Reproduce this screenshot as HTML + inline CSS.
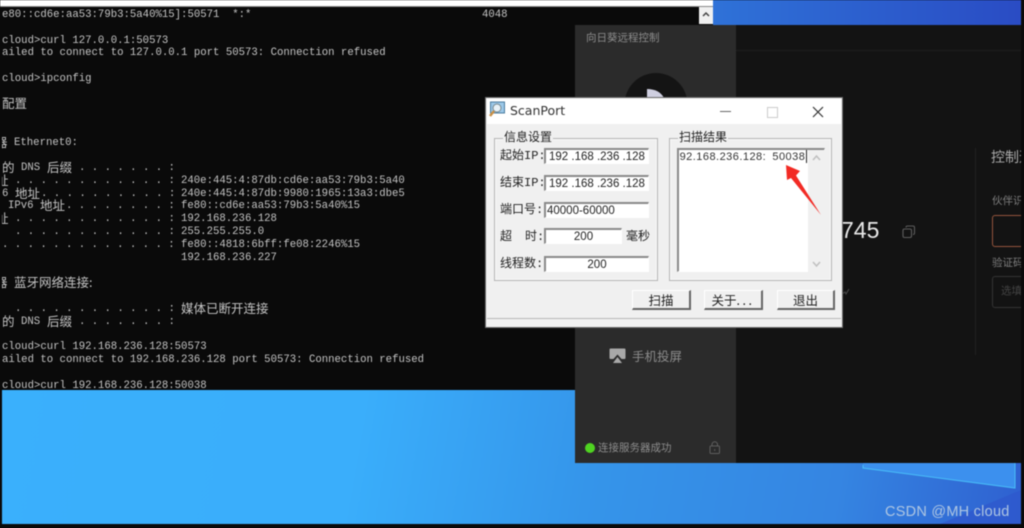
<!DOCTYPE html>
<html lang="zh"><head><meta charset="utf-8"><title>ScanPort</title>
<style>
html,body{margin:0;padding:0;width:1024px;height:528px;overflow:hidden;background:#0a0a0a}
#root{position:absolute;left:0;top:0;width:1024px;height:528px;overflow:hidden;filter:blur(.45px)}
.a{position:absolute;white-space:pre}
.t{font:10.67px/13px "Liberation Mono","Noto Sans CJK SC",monospace;color:#c4c4c4}
.c{font-family:"Noto Sans CJK SC","WenQuanYi Zen Hei",sans-serif}
.d{font:12px/16px "Liberation Mono","Noto Sans CJK SC",monospace;color:#222}
.f{position:absolute;background:#fff;border:1px solid #fff;border-top:2px solid #8a8a8a;border-left:2px solid #8a8a8a;box-sizing:border-box;font:11.5px/14px "Liberation Sans",sans-serif;color:#222;white-space:pre}
.b{position:absolute;top:290px;height:20px;box-sizing:border-box;background:#f0f0f0;border:1px solid #fff;border-right:2px solid #666;border-bottom:2px solid #666;font:12.5px/17px "Noto Sans CJK SC",sans-serif;color:#222;text-align:center}
.g{position:absolute;top:138px;height:143px;box-sizing:border-box;border:1px solid #b4b4b4;box-shadow:inset 0 0 0 1px #f8f8f8}
.s{color:#8c8c8c;font-family:"Noto Sans CJK SC",sans-serif}
</style></head><body><div id="root">
<!-- desktop -->
<div class="a" style="left:2px;top:390px;width:1019px;height:134px;background:linear-gradient(100deg,#3ab0fc 0%,#3aaefb 35%,#3595ea 58%,#3585e2 82%,#2f60d0 100%)"></div>
<div class="a" style="left:713px;top:0;width:308px;height:25px;background:linear-gradient(90deg,#2f72d8,#2a4cc4)"></div>
<svg class="a" style="left:0;top:0" width="1024" height="528">
<polygon points="863,463 1015,463 1015,488 863,468" fill="#3c90ee"/>
<polyline points="863,465 863,468 1015,488 1015,463" fill="none" stroke="#48bdf8" stroke-width="1"/>
<polygon points="1021,490 1021,524 940,524" fill="#2f58cc" opacity=".75"/>
</svg>
<!-- terminal top and scrollbar -->
<div class="a" style="left:0;top:0;width:713px;height:6px;background:#fff;border-bottom:1px solid #888"></div>
<div class="a" style="left:2px;top:7px;width:697px;height:383px;background:#0a0a0a"></div>
<div class="a" style="left:699px;top:7px;width:14px;height:17px;background:#f0f0f0"></div>
<svg class="a" style="left:699px;top:7px" width="14" height="17" fill="none" stroke="#444" stroke-width="1.500"><path d="M4 9 L7 6 L10 9"/></svg>
<!-- terminal text -->
<div class="a t" style="left:2px;top:9px">e80::cd6e:aa53:79b3:5a40%15]:50571  *:*</div>
<div class="a t" style="left:482px;top:9px">4048</div>
<div class="a t" style="left:2px;top:35px">cloud&gt;curl 127.0.0.1:50573</div>
<div class="a t" style="left:2px;top:47px">ailed to connect to 127.0.0.1 port 50573: Connection refused</div>
<div class="a t" style="left:2px;top:73px">cloud&gt;ipconfig</div>
<div class="a t c" style="left:2px;top:96px;font-size:12.5px">配置</div>
<div class="a" style="left:2px;top:135px;width:5px;height:14px;overflow:hidden"><div class="a t c" style="left:-7px;top:0;font-size:12.5px">器</div></div>
<div class="a t" style="left:14px;top:137px">Ethernet0:</div>
<div class="a t c" style="left:2px;top:160px;font-size:12.5px">的</div>
<div class="a t" style="left:21px;top:162px">DNS</div>
<div class="a t c" style="left:47px;top:160px;font-size:12.5px">后缀</div>
<div class="a t" style="left:79px;top:162px">. . . . . . . :</div>
<div class="a" style="left:2px;top:173px;width:6px;height:14px;overflow:hidden"><div class="a t c" style="left:-6px;top:0;font-size:12.5px">址</div></div>
<div class="a t" style="left:15px;top:175px">. . . . . . . . . . . . :</div>
<div class="a t" style="left:181px;top:175px">240e:445:4:87db:cd6e:aa53:79b3:5a40</div>
<div class="a t" style="left:2px;top:188px">6</div>
<div class="a t c" style="left:15px;top:186px;font-size:12.5px">地址</div>
<div class="a t" style="left:41px;top:188px">. . . . . . . . . . :</div>
<div class="a t" style="left:181px;top:188px">240e:445:4:87db:9980:1965:13a3:dbe5</div>
<div class="a t" style="left:8px;top:200px">IPv6</div>
<div class="a t c" style="left:40px;top:198px;font-size:12.5px">地址</div>
<div class="a t" style="left:66px;top:200px">. . . . . . . . :</div>
<div class="a t" style="left:181px;top:200px">fe80::cd6e:aa53:79b3:5a40%15</div>
<div class="a" style="left:2px;top:211px;width:6px;height:14px;overflow:hidden"><div class="a t c" style="left:-6px;top:0;font-size:12.5px">址</div></div>
<div class="a t" style="left:15px;top:213px">. . . . . . . . . . . . :</div>
<div class="a t" style="left:181px;top:213px">192.168.236.128</div>
<div class="a t" style="left:15px;top:226px">. . . . . . . . . . . . :</div>
<div class="a t" style="left:181px;top:226px">255.255.255.0</div>
<div class="a t" style="left:2px;top:239px">. . . . . . . . . . . . . :</div>
<div class="a t" style="left:181px;top:239px">fe80::4818:6bff:fe08:2246%15</div>
<div class="a t" style="left:181px;top:252px">192.168.236.227</div>
<div class="a" style="left:2px;top:275px;width:5px;height:14px;overflow:hidden"><div class="a t c" style="left:-7px;top:0;font-size:12.5px">器</div></div>
<div class="a t c" style="left:14px;top:275px;font-size:12.5px">蓝牙网络连接:</div>
<div class="a t" style="left:15px;top:303px">. . . . . . . . . . . . :</div>
<div class="a t c" style="left:181px;top:301px;font-size:12.5px">媒体已断开连接</div>
<div class="a t c" style="left:2px;top:314px;font-size:12.5px">的</div>
<div class="a t" style="left:21px;top:316px">DNS</div>
<div class="a t c" style="left:47px;top:314px;font-size:12.5px">后缀</div>
<div class="a t" style="left:79px;top:316px">. . . . . . . :</div>
<div class="a t" style="left:2px;top:341px">cloud&gt;curl 192.168.236.128:50573</div>
<div class="a t" style="left:2px;top:354px">ailed to connect to 192.168.236.128 port 50573: Connection refused</div>
<div class="a t" style="left:2px;top:380px;height:10px;overflow:hidden">cloud&gt;curl 192.168.236.128:50038</div>
<!-- remote-control window -->
<div class="a" style="left:575px;top:25px;width:446px;height:438px;background:#131313"></div>
<div class="a" style="left:575px;top:25px;width:161px;height:438px;background:#2b2b2b"></div>
<div class="a" style="left:736px;top:50px;width:285px;height:1px;background:#1e1e1e"></div>
<div class="a s" style="left:586px;top:30px;font-size:10.5px;line-height:16px">向日葵远程控制</div>
<svg class="a" style="left:575px;top:25px" width="161" height="100">
<circle cx="81" cy="79.500" r="31.500" fill="#141414"/>
<path d="M72 64 C80 64 86 67 89 73 V74 H72 Z" fill="#cfcfe0"/>
</svg>
<svg class="a" style="left:609px;top:348px" width="17" height="16"><path d="M1.500 0.500 H15.500 Q16.500 0.500 16.500 1.500 V10 Q16.500 11 15.500 11 H12.500 L8.500 6.500 L4.500 11 H1.500 Q0.500 11 0.500 10 V1.500 Q0.500 0.500 1.500 0.500Z" fill="#a8a8a8"/><path d="M8.500 9 L13 15 H4Z" fill="#a8a8a8"/></svg>
<div class="a s" style="left:632px;top:347px;font-size:12.5px;line-height:18px">手机投屏</div>
<div class="a" style="left:585px;top:443px;width:10px;height:10px;border-radius:50%;background:#4fd321"></div>
<div class="a s" style="left:598px;top:440px;font-size:10.5px;line-height:16px">连接服务器成功</div>
<svg class="a" style="left:709px;top:441px" width="12" height="14" fill="none" stroke="#5e5e5e" stroke-width="1"><rect x="1" y="5" width="9.500" height="7.500" rx="1"/><path d="M3 5 V3.500 A2.700 2.700 0 0 1 8.500 3.500 V5"/><path d="M5.700 8 V10"/></svg>
<div class="a" style="left:841px;top:213px;font:23px/34px 'Liberation Sans',sans-serif;color:#e8e8e8">745</div>
<svg class="a" style="left:902px;top:225px" width="14" height="14" fill="none" stroke="#5c5c5c" stroke-width="1.100"><rect x="1" y="4" width="8.500" height="8.500" rx="1.500"/><path d="M4 2.500 Q4 1 5.500 1 H11 Q12.500 1 12.500 2.500 V8 Q12.500 9.500 11 9.500"/></svg>
<svg class="a" style="left:841px;top:288px" width="9" height="8" fill="none" stroke="#4a4a4a"><path d="M1 6 L4 4 L5 6 L8 1"/></svg>
<div class="a" style="left:975px;top:148px;width:1px;height:207px;background:#202020"></div>
<div class="a" style="left:991px;top:146px;width:30px;height:22px;overflow:hidden;font:14px/22px 'Noto Sans CJK SC',sans-serif;color:#aaa">控制远程</div>
<div class="a" style="left:992px;top:193px;width:29px;height:16px;overflow:hidden;font:10.5px/16px 'Noto Sans CJK SC',sans-serif;color:#7e7e7e">伙伴识别码</div>
<div class="a" style="left:992px;top:215px;width:40px;height:32px;box-sizing:border-box;border:1.300px solid #94553c;border-radius:3px"></div>
<div class="a" style="left:992px;top:255px;width:29px;height:16px;overflow:hidden;font:10.5px/16px 'Noto Sans CJK SC',sans-serif;color:#7e7e7e">验证码框</div>
<div class="a" style="left:992px;top:276px;width:40px;height:32px;box-sizing:border-box;border:1.300px solid #333;border-radius:3px"></div>
<div class="a" style="left:1001px;top:283px;font:10.5px/16px 'Noto Sans CJK SC',sans-serif;color:#444">选填</div>
<div class="a" style="left:1021px;top:0;width:3px;height:528px;background:#0a0a0a"></div>
<!-- ScanPort dialog -->
<div class="a" style="left:486px;top:98px;width:356px;height:229px;background:#f0f0f0;box-shadow:0 0 0 1px #6a6a6a"></div>
<div class="a" style="left:487px;top:99px;width:354px;height:25px;background:#fff"></div>
<svg class="a" style="left:489px;top:101px" width="18" height="18"><rect x="1.500" y="1" width="14" height="11" fill="#9cc8e8" stroke="#4a7ca0"/><circle cx="8" cy="7" r="4" fill="#e8f2f8" stroke="#7a8a90"/><path d="M5 10 L1 15" stroke="#c89048" stroke-width="2.500"/></svg>
<div class="a" style="left:510px;top:102px;font:12.5px/18px 'DejaVu Sans','Liberation Sans',sans-serif;color:#333">ScanPort</div>
<div class="a" style="left:720px;top:111px;width:11px;height:1px;background:#666"></div>
<div class="a" style="left:767px;top:107px;width:9px;height:9px;border:1px solid #ccc"></div>
<svg class="a" style="left:812px;top:106px" width="12" height="12" stroke="#333" stroke-width="1.200"><path d="M1 1 L11 11 M11 1 L1 11"/></svg>
<div class="g" style="left:494px;width:164px"></div>
<div class="g" style="left:669px;width:163px"></div>
<div class="a d" style="left:503px;top:130px;background:#f0f0f0;padding:0 1px">信息设置</div>
<div class="a d" style="left:678px;top:130px;background:#f0f0f0;padding:0 1px">扫描结果</div>
<div class="a d" style="left:500px;top:148px">起始IP:</div>
<div class="a d" style="left:500px;top:175px">结束IP:</div>
<div class="a d" style="left:500px;top:202px">端口号:</div>
<div class="a d" style="left:500px;top:229px">超</div>
<div class="a d" style="left:525px;top:229px">时:</div>
<div class="a d" style="left:500px;top:256px">线程数:</div>
<div class="a d" style="left:626px;top:229px">毫秒</div>
<div class="f" style="left:544px;top:148px;width:105px;height:16px;padding-left:3px">192 .168 .236 .128</div>
<div class="f" style="left:544px;top:175px;width:105px;height:16px;padding-left:3px">192 .168 .236 .128</div>
<div class="f" style="left:544px;top:202px;width:105px;height:16px;padding-left:1px">40000-60000</div>
<div class="f" style="left:544px;top:228px;width:78px;height:16px;text-align:center">200</div>
<div class="f" style="left:544px;top:256px;width:105px;height:16px;text-align:center">200</div>
<div class="f" style="left:677px;top:148px;width:148px;height:124px;overflow:hidden"></div>
<div class="a" style="left:679px;top:150px;width:128px;height:14px;overflow:hidden;font:11px/14px 'Liberation Sans',sans-serif;color:#333"><span class="a" style="left:-6px;top:0;letter-spacing:.47px">192.168.236.128:&#8201; 50038</span></div>
<div class="a" style="left:806px;top:150px;width:1px;height:13px;background:#222"></div>
<div class="a" style="left:808px;top:150px;width:17px;height:122px;background:#f0f0f0"></div>
<svg class="a" style="left:808px;top:150px" width="17" height="122" fill="none" stroke="#c0c0c0" stroke-width="1.500"><path d="M5 10 L8.500 6 L12 10 M5 112 L8.500 116 L12 112"/></svg>
<svg class="a" style="left:0;top:0" width="1024" height="528"><polygon points="786,165 800,171 796,175.500 821,215 791,178 787,180" fill="#f22a24"/></svg>
<div class="b" style="left:632px;width:59px">扫描</div>
<div class="b" style="left:704px;width:59px">关于<span style="letter-spacing:2.500px">...</span></div>
<div class="b" style="left:777px;width:58px">退出</div>
<div class="a" style="left:487px;top:318px;width:354px;height:1px;background:#b8b8b8"></div>
<div class="a" style="left:885px;top:503px;font:14.5px/18px 'Liberation Sans',sans-serif;color:#aec6e2;letter-spacing:.25px">CSDN @MH cloud</div>
</div></body></html>
